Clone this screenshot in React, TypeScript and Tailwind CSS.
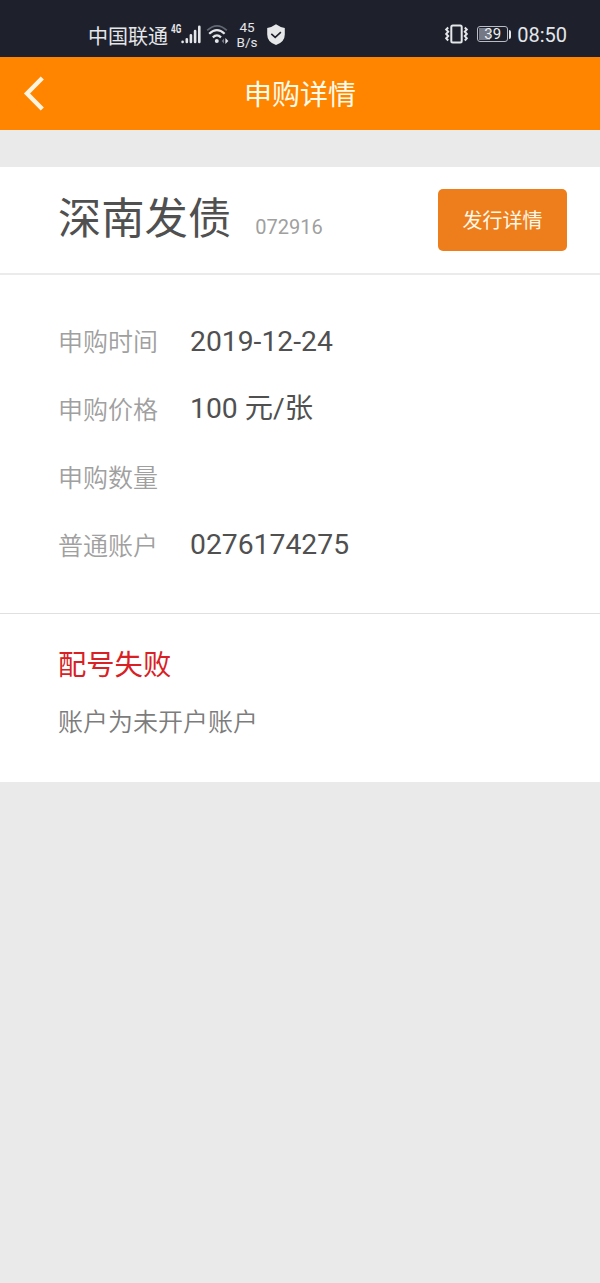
import type { ReactNode } from 'react'

interface DetailRow {
  label: string
  value: string
}

const ROWS: DetailRow[] = [
  { label: '申购时间', value: '2019-12-24' },
  { label: '申购价格', value: '100 元/张' },
  { label: '申购数量', value: '' },
  { label: '普通账户', value: '0276174275' },
]

function SignalIcon() {
  return (
    <svg className="mt-[25px] h-[19px] w-5" viewBox="0 0 20 19" stroke="#e4e6ea" strokeWidth="2.6" strokeLinecap="round">
      <path d="M1.6 16.8v0.1M5.8 14.3v2.6M9.9 10.3v6.6M14.1 6v10.9M18.3 1.8v15.1" />
    </svg>
  )
}

function WifiIcon() {
  return (
    <svg className="mt-6 ml-[5px] h-5 w-[23px]" viewBox="0 0 23 20" fill="none" strokeWidth="2.2">
      <path d="M1.2 6.4Q11 -2.6 20.8 6.4" stroke="#626774" strokeWidth="1.7" />
      <path d="M3.2 9.8Q11 2.5 18.6 9.8M6.8 13.4Q11 9.4 15 13.4" stroke="#e4e6ea" />
      <circle cx="10.8" cy="17" r="2" fill="#e4e6ea" />
      <path d="M18 14.5v5L15.6 17z" fill="#737783" />
      <path d="M19.4 14v6L22.4 17z" fill="#e4e6ea" />
    </svg>
  )
}

function ShieldIcon() {
  return (
    <svg className="mt-[24px] ml-[8px] h-[22px] w-5" viewBox="0 0 20 22" fill="none">
      <path d="M10 .3Q13.5 3 18.8 3.9V10.5Q18.8 18 10 21Q1.2 18 1.2 10.5V3.9Q6.5 3 10 .3Z" fill="#e6e7e9" />
      <path d="M5.3 9.8l3.9 3.6 5.7-5.3" stroke="#1e212c" strokeWidth="1.6" />
    </svg>
  )
}

function VibrateIcon() {
  return (
    <svg className="mt-6 h-5 w-[25px]" viewBox="0 0 25 20" fill="none" stroke="#e4e6ea">
      <rect x="7.3" y="1.5" width="10.4" height="17" rx="1.5" strokeWidth="2" />
      <path d="M4.2 3.5L2.2 5.5l2 2.2-2 2.2 2 2.2-2 2.2 2 2.2" strokeWidth="2" />
      <path d="M20.8 3.5l2 2-2 2.2 2 2.2-2 2.2 2 2.2-2 2.2" strokeWidth="2" />
    </svg>
  )
}

function Battery({ level }: { level: number }) {
  return (
    <div className="mt-[26px] ml-2 flex h-4 items-center">
      <div className="relative h-4 w-[31px] overflow-hidden rounded-[3px] border border-[#b9bcc4]">
        <div className="m-px h-3 bg-[#757985]" style={{ width: `${level}%` }} />
        <span className="absolute inset-0 text-center text-[15px] leading-[14px] text-[#eceef1]">{level}</span>
      </div>
      <div className="ml-px h-[9px] w-0.5 rounded-r-sm bg-[#e4e6ea]" />
    </div>
  )
}

function StatusBar() {
  return (
    <div className="flex h-[57px] items-start justify-between bg-[#1e212c] pr-[33px] pl-[88px] text-[#e4e6ea]">
      <div className="flex items-start">
        <span className="mt-[22px] text-[20px] leading-[30px]">中国联通</span>
        <span className="mt-[23px] ml-[3px] w-[10px] origin-left scale-x-[0.68] text-[12px] leading-[12px] font-bold">4G</span>
        <SignalIcon />
        <WifiIcon />
        <span className="mt-[20px] ml-[7px] w-[22px] text-center text-[13.5px] leading-[15px]">
          45
          <br />
          B/s
        </span>
        <ShieldIcon />
      </div>
      <div className="flex items-start">
        <VibrateIcon />
        <Battery level={39} />
        <span className="mt-5 ml-[6px] text-[20px] leading-[30px]">08:50</span>
      </div>
    </div>
  )
}

function Header() {
  return (
    <header className="relative flex h-[73px] items-center justify-center bg-[#ff8500]">
      <button className="absolute top-[18px] left-[23px]" aria-label="返回">
        <svg className="h-9 w-[22px]" viewBox="0 0 22 36" fill="none" stroke="#fff4df" strokeWidth="4.4">
          <path d="M19.3 3L4 18.5 19.3 34" />
        </svg>
      </button>
      <h1 className="pt-1 text-[28px] leading-10 text-[#fffbea]">申购详情</h1>
    </header>
  )
}

function Section({ className, children }: { className: string; children: ReactNode }) {
  return <section className={`bg-white pl-[58px] ${className}`}>{children}</section>
}

export default function App() {
  return (
    <div className="min-h-screen w-full bg-[#eaeaea] font-['Roboto','Noto_Sans_CJK_SC',sans-serif]">
      <StatusBar />
      <Header />
      <main className="mt-[37px]">
        <Section className="flex h-[108px] items-start border-b-2 border-[#ebebeb] pr-[33px]">
          <h2 className="mt-[22px] text-[43.3px] leading-[62px] text-[#505050]">深南发债</h2>
          <span className="mt-[45px] ml-6 text-[20px] leading-[30px] text-[#a0a0a0]">072916</span>
          <button className="mt-[22px] ml-auto h-[62px] w-[129px] rounded-[5px] bg-[#ee7e1b] pt-px text-[20px] text-[#fff8e8]">
            发行详情
          </button>
        </Section>
        <Section className="h-[339px] border-b border-[#e0e0e0] pt-[33px]">
          {ROWS.map(({ label, value }) => (
            <div key={label} className="flex h-[67.8px] items-center">
              <span className="w-[132px] pt-0.5 text-[25px] font-[350] text-[#a0a0a0]">{label}</span>
              <span className="text-[28.3px] text-[#505050]">{value}</span>
            </div>
          ))}
        </Section>
        <Section className="h-[168px] pt-[31px]">
          <p className="text-[28.3px] leading-[42px] text-[#d92024]">配号失败</p>
          <p className="mt-[18px] text-[25px] leading-[36px] font-[350] text-[#7c7c7c]">账户为未开户账户</p>
        </Section>
      </main>
    </div>
  )
}
